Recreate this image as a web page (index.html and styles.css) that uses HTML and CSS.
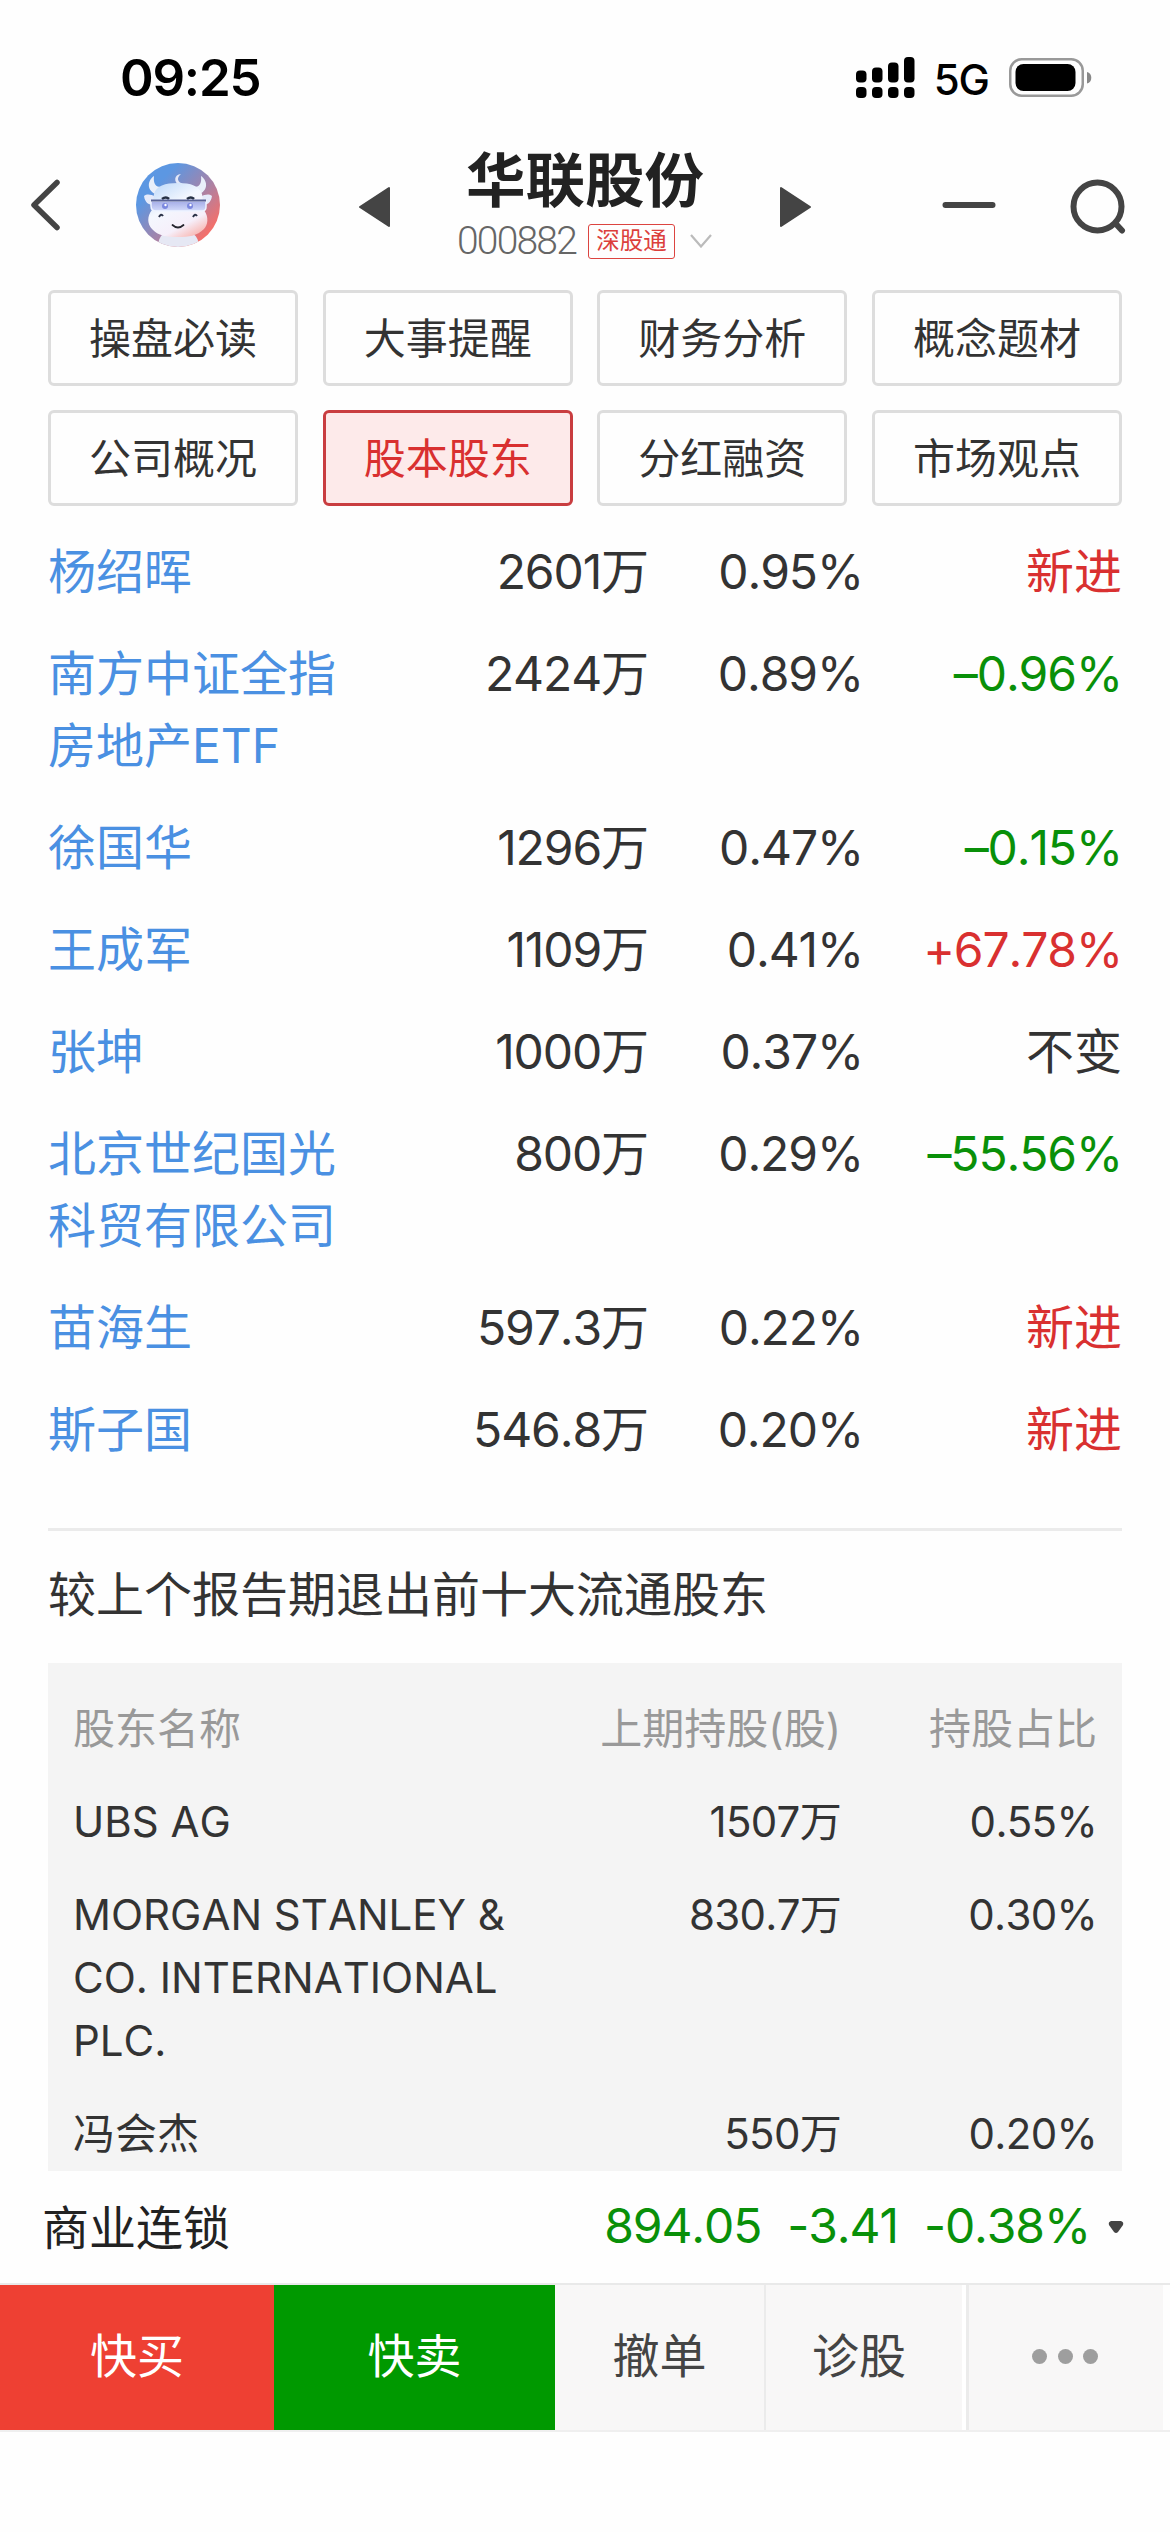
FILE: index.html
```html
<!DOCTYPE html>
<html lang="zh-CN">
<head>
<meta charset="utf-8">
<title>华联股份 000882</title>
<link rel="stylesheet" href="styles.css">
</head>
<body>
<div class="status">
  <span class="time">09:25</span>
  <div class="status-icons">
    <svg class="signal" width="59" height="42" viewBox="0 0 59 42">
      <rect x="0" y="13.500" width="10.500" height="12" rx="4"/><rect x="16" y="10.500" width="10.500" height="15" rx="4"/><rect x="32" y="5.500" width="10.500" height="20" rx="4"/><rect x="48" y="0" width="10.500" height="25.500" rx="4"/>
      <rect x="0" y="30" width="10.500" height="11" rx="4"/><rect x="16" y="30" width="10.500" height="11" rx="4"/><rect x="32" y="30" width="10.500" height="11" rx="4"/><rect x="48" y="30" width="10.500" height="11" rx="4"/>
    </svg>
    <span class="net">5G</span>
    <svg width="83" height="40" viewBox="0 0 83 40">
      <rect x="1.250" y="1.250" width="72.500" height="36.500" rx="11.500" fill="none" stroke="#999" stroke-width="2.500"/>
      <rect x="6.500" y="6" width="60" height="27" rx="8"/>
      <path d="M78 14v11.500a6 6 0 0 0 0-11.500z" fill="#888"/>
    </svg>
  </div>
</div>

<header class="header">
  <svg class="back" width="32" height="52" viewBox="0 0 32 52"><path d="M28 3.500 5 26l23 22.500" fill="none" stroke="#444" stroke-width="5.500" stroke-linecap="round" stroke-linejoin="round"/></svg>
  <svg class="avatar" width="84" height="84" viewBox="0 0 84 84">
    <defs>
      <linearGradient id="sky" x1="0.1" y1="0.1" x2="0.9" y2="0.85"><stop offset="0.2" stop-color="#5c97e2"/><stop offset="0.6" stop-color="#a683a8"/><stop offset="0.95" stop-color="#f2706c"/></linearGradient>
      <linearGradient id="face" x1="0.2" y1="0" x2="0.8" y2="1"><stop offset="0" stop-color="#c3dcfa"/><stop offset="0.4" stop-color="#f4f7fe"/><stop offset="0.75" stop-color="#f6effa"/><stop offset="1" stop-color="#f9b4ae"/></linearGradient>
      <linearGradient id="lens" x1="0" y1="0" x2="0" y2="1"><stop offset="0" stop-color="#a3abe6"/><stop offset="1" stop-color="#d3dbfb"/></linearGradient>
      <clipPath id="round"><circle cx="42" cy="42" r="42"/></clipPath>
    </defs>
    <g clip-path="url(#round)">
      <rect width="84" height="84" fill="url(#sky)"/>
      <path d="M22 84c0-12 7-17 20-17s21 5 21 17z" fill="#e6e8f4"/>
      <path d="M19 31C10 26 12 17 18 13c-1 8 2 11 7 11zM64 31c9-5 7-14 1-18 1 8-2 11-7 11z" fill="#e9effa"/>
      <path d="M45 11c-7 0-8 9-1 11 3 1 4-1 1-2-4-2-4-6 0-9z" fill="#e4e8f7"/>
      <path d="M20 34c-6-3-9-3-12-1 1 7 5 9 10 9zM64 34c6-3 9-3 12-1-1 7-5 9-10 9z" fill="#e5eafa"/>
      <path d="M18 31c2-8 11-11 24-11s21 3 24 11l2 16c5 7 4 15 0 19-7 7-15 8-26 8s-20-1-26-8c-5-5-5-13 0-19z" fill="url(#face)"/>
      <path d="M26 36q4-3 7 0M51 36q4-3 7 0" fill="none" stroke="#263044" stroke-width="2.600"/>
      <path d="M15 38h55v6c0 3-1 4-4 4H20c-4 0-5-2-5-5z" fill="url(#lens)" stroke="#eef3ff" stroke-width="1.500"/>
      <path d="M15 37.500h55" stroke="#596296" stroke-width="1.800"/>
      <circle cx="29" cy="43" r="3" fill="#7c88df"/><circle cx="54" cy="43" r="3" fill="#7c88df"/><circle cx="29.500" cy="42" r="1.200" fill="#fff"/><circle cx="54.500" cy="42" r="1.200" fill="#fff"/>
      <path d="M23 54q2-4 4-1M57 54q2-4 4-1" fill="none" stroke="#2b3248" stroke-width="2"/>
      <path d="M36.500 62q5.500 5 11 0" fill="none" stroke="#27272f" stroke-width="1.800" stroke-linecap="round"/>
    </g>
  </svg>
  <svg class="prev" width="31" height="42" viewBox="0 0 31 42"><path d="M1 21 30 2v38z" fill="#444" stroke="#444" stroke-width="2" stroke-linejoin="round"/></svg>
  <div class="stock">
    <h1 class="stock-name">华联股份</h1>
    <div class="stock-meta">
      <span class="code">000882</span>
      <span class="badge">深股通</span>
      <svg width="22" height="14" viewBox="0 0 22 14"><path d="M1 1l10 11.500L21 1" fill="none" stroke="#bbb" stroke-width="2.200"/></svg>
    </div>
  </div>
  <svg class="next" width="31" height="42" viewBox="0 0 31 42"><path d="M30 21 1 2v38z" fill="#444" stroke="#444" stroke-width="2" stroke-linejoin="round"/></svg>
  <svg class="minus" width="54" height="8" viewBox="0 0 54 8"><path d="M3.500 4h47" stroke="#444" stroke-width="6" stroke-linecap="round"/></svg>
  <svg class="search" width="56" height="56" viewBox="0 0 56 56" fill="none" stroke="#444" stroke-width="6" stroke-linecap="round"><circle cx="27.500" cy="27.500" r="24"/><path d="m46 45 6 6.500"/></svg>
</header>

<nav class="tabs">
  <a class="tab">操盘必读</a><a class="tab">大事提醒</a><a class="tab">财务分析</a><a class="tab">概念题材</a>
  <a class="tab">公司概况</a><a class="tab active">股本股东</a><a class="tab">分红融资</a><a class="tab">市场观点</a>
</nav>

<main class="content">
  <section class="holders">
    <div class="row"><a class="name">杨绍晖</a><span class="num">2601万</span><span class="num">0.95%</span><span class="num up cn">新进</span></div>
    <div class="row"><a class="name">南方中证全指房地产ETF</a><span class="num">2424万</span><span class="num">0.89%</span><span class="num down">–0.96%</span></div>
    <div class="row"><a class="name">徐国华</a><span class="num">1296万</span><span class="num">0.47%</span><span class="num down">–0.15%</span></div>
    <div class="row"><a class="name">王成军</a><span class="num">1109万</span><span class="num">0.41%</span><span class="num up">+67.78%</span></div>
    <div class="row"><a class="name">张坤</a><span class="num">1000万</span><span class="num">0.37%</span><span class="num cn">不变</span></div>
    <div class="row"><a class="name">北京世纪国光科贸有限公司</a><span class="num">800万</span><span class="num">0.29%</span><span class="num down">–55.56%</span></div>
    <div class="row"><a class="name">苗海生</a><span class="num">597.3万</span><span class="num">0.22%</span><span class="num up cn">新进</span></div>
    <div class="row"><a class="name">斯子国</a><span class="num">546.8万</span><span class="num">0.20%</span><span class="num up cn">新进</span></div>
  </section>

  <section class="exited">
    <h2 class="exited-title">较上个报告期退出前十大流通股东</h2>
    <div class="panel">
      <div class="prow head"><span>股东名称</span><span class="num">上期持股(股)</span><span class="num">持股占比</span></div>
      <div class="prow"><span>UBS AG</span><span class="num">1507万</span><span class="num">0.55%</span></div>
      <div class="prow"><span>MORGAN STANLEY &amp; CO. INTERNATIONAL PLC.</span><span class="num">830.7万</span><span class="num">0.30%</span></div>
      <div class="prow"><span>冯会杰</span><span class="num">550万</span><span class="num">0.20%</span></div>
    </div>
  </section>
</main>

<div class="quote">
  <span class="sector">商业连锁</span>
  <div class="quote-nums"><span>894.05</span><span>-3.41</span><span>-0.38%</span></div>
  <svg width="16" height="14" viewBox="0 0 16 14"><path d="M3 1h10q3 1 2 4l-5 7q-2 2-4 0L1 5Q0 2 3 1z" fill="#444"/></svg>
</div>

<footer class="actions">
  <button class="action buy">快买</button>
  <button class="action sell">快卖</button>
  <button class="action cancel">撤单</button>
  <button class="action diagnose">诊股</button>
  <button class="action more"><i></i><i></i><i></i></button>
</footer>
</body>
</html>
```
FILE: styles.css
```css
* { box-sizing: border-box; }

body {
  margin: 0;
  width: 1170px;
  height: 2532px;
  overflow: hidden;
  display: flex;
  flex-direction: column;
  background: #fefefe;
  color: #333;
  font-family: Inter, "Noto Sans CJK SC", sans-serif;
  font-kerning: none;
}

svg { display: block; flex: none; }

.status {
  height: 144px;
  padding: 12px 78px 0 120px;
  display: flex;
  justify-content: space-between;
  align-items: center;
  color: #000;
}
.time { font-size: 51px; font-weight: 600; line-height: 60px; letter-spacing: -1.2px; }
.status-icons { display: flex; align-items: center; }
.net { margin: 3px 20px 0 19px; font-size: 42px; font-weight: 500; line-height: 48px; letter-spacing: -1px; }

.header { height: 146px; padding: 0 44px 0 29px; display: flex; align-items: flex-start; }
.back { margin-top: 35px; }
.avatar { margin: 19px 0 0 75px; }
.prev { margin: 42px 0 0 139px; }
.stock { width: 392px; display: flex; flex-direction: column; }
.stock-name { margin: 0; font-size: 59.5px; line-height: 72px; font-weight: 700; color: #222; text-align: center; }
.stock-meta { height: 50px; padding-left: 67px; display: flex; align-items: center; }
.code { width: 131px; font-family: Roboto, sans-serif; font-weight: 300; font-size: 39px; letter-spacing: -1.8px; color: #666; line-height: 48px; }
.badge {
  width: 87px; height: 35px; margin-right: 15px;
  display: flex; align-items: center; justify-content: center;
  border: 1.5px solid #dc4440; border-radius: 3px;
  color: #dc3f3c; font-size: 23.5px; line-height: 30px;
}
.next { margin-top: 42px; }
.minus { margin: 57px 0 0 131px; }
.search { margin: 35px 0 0 74px; }

.tabs {
  padding: 0 48px;
  display: grid;
  grid-template-columns: repeat(4, 250px);
  justify-content: space-between;
  row-gap: 24px;
}
.tab {
  height: 96px;
  padding-bottom: 5px;
  display: flex; align-items: center; justify-content: center;
  border: 3px solid #ddd; border-radius: 6px;
  font-size: 42px;
}
.tab.active { border-color: #c93d40; background: #fdeaea; color: #d93030; }

.content { padding: 15px 48px 0; height: 1665px; }
.row {
  display: grid;
  grid-template-columns: 296px 304px 215px 259px;
  padding: 15px 0;
  font-size: 48px;
  line-height: 72px;
}
.name { color: #4a90e2; }
.num { text-align: right; letter-spacing: -0.5px; }
.row .num { letter-spacing: -1.1px; }
.row .num.cn { letter-spacing: 0; }
.up { color: #d93030; }
.down { color: #099009; }

.exited { margin-top: 47px; border-top: 3px solid #ebebeb; }
.exited-title { margin: 0; padding: 28px 0 32px; font-size: 48px; line-height: 72px; font-weight: 400; }
.panel { height: 508px; padding: 19px 25px 0; background: #f4f4f4; }
.prow {
  display: grid;
  grid-template-columns: 450px 318px 256px;
  padding: 15px 0;
  font-size: 42px;
  line-height: 63px;
}
.prow .num { letter-spacing: -0.7px; }
.prow.head .num { letter-spacing: 0; }
.head { color: #999; }

.quote { height: 112px; padding: 0 46px 0 42px; display: flex; align-items: center; }
.sector { flex: 1; font-size: 47px; padding-bottom: 5px; color: #222; }
.quote-nums { display: flex; gap: 26px; margin-right: 18px; padding-bottom: 3px; font-size: 48px; color: #099009; letter-spacing: -1.1px; }

.actions {
  height: 149px;
  display: grid;
  grid-template-columns: 274px 281px 209px 202px 197px;
  border-top: 2px solid #e9e9e9;
  border-bottom: 2px solid #efefef;
}
.action {
  margin: 0; padding: 0 0 4px; border: 0;
  display: flex; align-items: center; justify-content: center;
  background: #f8f7f7; color: #444;
  font: 400 47px/60px Inter, "Noto Sans CJK SC", sans-serif;
}
.buy { background: #ee4033; color: #fff; }
.sell { background: #090; color: #fff; }
.diagnose { padding-right: 10px; border-left: 2px solid #ebebeb; border-right: 4px solid #fff; }
.more { gap: 10.500px; padding: 0 2px 3px 0; border-left: 3px solid #ebebeb; }
.more i { width: 15px; height: 15px; border-radius: 50%; background: #9e9e9e; }
```
